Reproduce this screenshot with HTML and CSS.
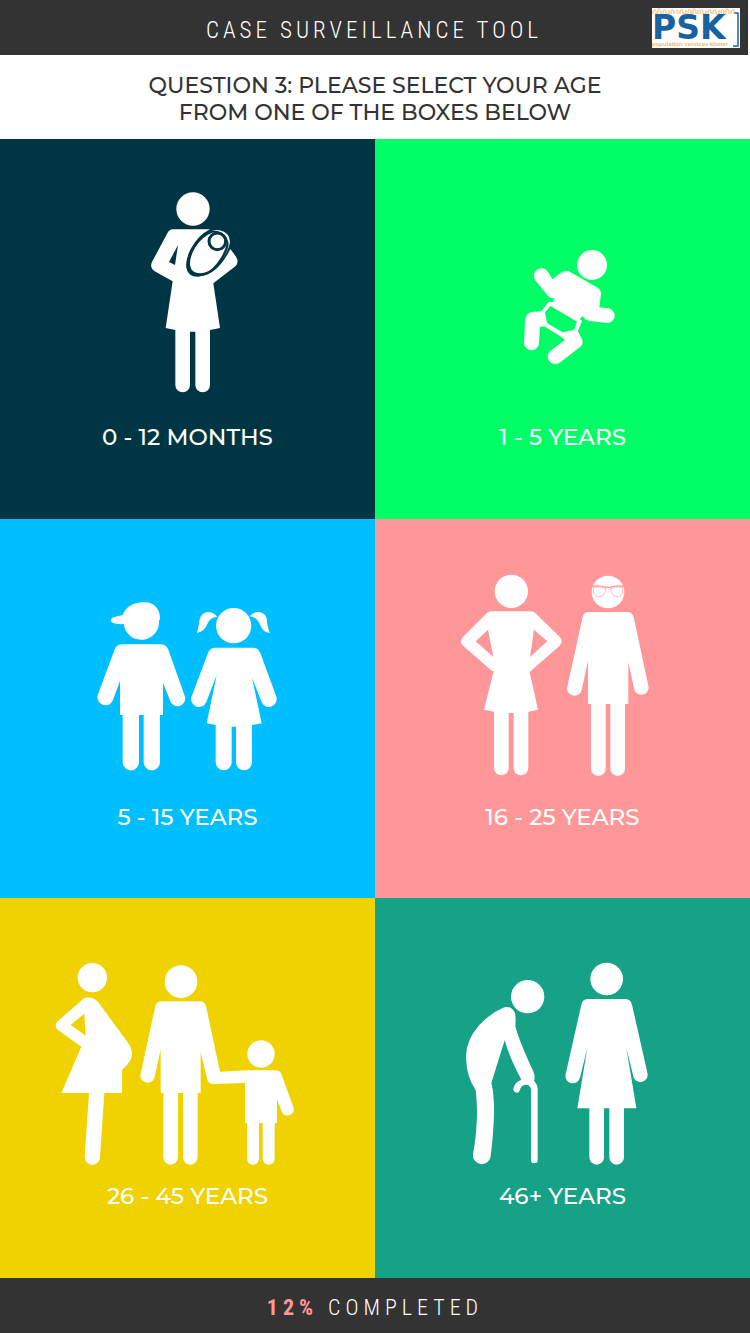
FILE: index.html
```html
<!DOCTYPE html>
<html lang="en">
<head>
<meta charset="utf-8">
<meta name="viewport" content="width=device-width, initial-scale=1">
<title>Case Surveillance Tool</title>
<link rel="stylesheet" href="styles.css">
</head>
<body>
<header class="topbar">
  <h1 class="topbar-title">Case Surveillance Tool</h1>
  <svg class="logo" viewBox="0 0 88 40" role="img" aria-label="PSK population services khmer">
    <rect width="88" height="40" fill="#fff"/>
    <path d="M82 5h4v33h-5" fill="none" stroke="#1763a2" stroke-width="1.5"/>
    <path d="M1 6V3q2-3 3 0v3q2 2 2-3t3 0v3m2 0V3q2-3 3 0v3h3V2m2 4V3q2-3 3 0v3m2-4q3 0 2 4m2 0V3q2-3 3 0v3h3V2m2 4V3q2-3 3 0v3q2 2 2-3t3 0v3m2 0V2m2 4V3q2-3 3 0v3h3V2m2 4V3q2-3 3 0v3m2 0V3q2-3 3 0v3h3V2m2 4V3q2-3 3 0v3q2 2 2-3t3 0v3m2 0V3q2-3 3 0v3" fill="none" stroke="#f8b566" stroke-width="1"/>
    <text class="logo-name" x="0" y="31">PSK</text>
    <text class="logo-sub" x="0" y="38">population services khmer</text>
  </svg>
</header>
<main class="survey">
  <h2 class="question">Question 3: Please select your age<br>from one of the boxes below</h2>
  <div class="choices">
    <button type="button" class="choice navy">
      <svg class="figure" viewBox="-390 -123 1125 816" aria-hidden="true">
        <circle cx="189" cy="87" r="50"/>
        <path d="M129 148H240Q205 165 182 207Q166 239 169 264Q175 291 205 290Q248 286 278 245Q295 221 301 207L318 230Q328 245 317 258L250 310L270 444L240 450V615a22 22 0 0 1-44 0V455H180V615a22 22 0 0 1-44 0V450L107 444L128 304L74 274Q58 262 66 246L112 160Q118 148 129 148ZM144 195L117 246L135 255Z" fill-rule="evenodd"/>
        <path d="M240 155C268 143 298 158 299 186C299 214 262 265 231 276C198 287 179 274 180 249C181 218 209 169 240 155Z"/>
        <path class="cut" stroke-width="7" d="M243 156C268 146 293 160 293 186C293 214 260 269 228 281C195 292 172 277 174 249C176 216 208 170 243 156Z"/>
        <path d="M246 151Q282 145 297 170Q301 186 297 196Q294 172 278 160Q263 151 246 151Z"/>
        <circle class="cut" cx="262" cy="184" r="25" stroke-width="9"/>
      </svg>
      <span class="label">0 - 12 months</span>
    </button>
    <button type="button" class="choice green">
      <svg class="figure" viewBox="-405 -288 1125 816" aria-hidden="true">
        <circle cx="246" cy="90" r="45"/>
        <path d="M128 133L148 116Q166 102 182 112L263 158Q273 164 273 176L268 217L294 220A22 22 0 0 1 290 264L236 257Q223 254 218 243L209 252L216 257L204 289L216 313Q221 324 213 334L148 384A23 23 0 0 1 118 350L165 314L154 306L105 275H90L87 323A22 22 0 0 1 42 323L45 258Q47 231 70 230L94 229L116 200L128 202L134 189Q121 191 115 184L77 138A23 23 0 0 1 112 108ZM121 213L105 232L111 264L157 292L192 285L201 260Z" fill-rule="evenodd"/>
      </svg>
      <span class="label">1 - 5 years</span>
    </button>
    <button type="button" class="choice blue">
      <svg class="figure" viewBox="-255 -216 1125 816" aria-hidden="true">
        <path d="M113 73C122 48 145 33 178 34C209 34 227 56 225 87H222A53 53 0 0 1 116 99C94 101 77 96 77 88C79 78 95 76 113 73Z"/>
        <path d="M111 160H228Q243 161 250 176L299 314A23 23 0 0 1 256 331L234 275V372H225V514a24 24 0 0 1-49 0V372H162V514a24 24 0 0 1-49 0V372H105V270L83 329A24 24 0 0 1 38 313L88 178Q94 160 111 160Z"/>
        <circle cx="446" cy="104" r="53"/>
        <path d="M397 78Q388 64 371 63Q349 64 344 85Q341 107 336 126Q359 121 367 99Q376 77 397 78ZM494 76Q505 62 522 63Q540 65 545 82Q546 108 555 126Q534 124 525 101Q517 78 494 76Z"/>
        <path d="M389 170H506Q520 171 526 186L573 314A23 23 0 0 1 530 334L501 260L530 397L501 402V514a24 24 0 0 1-48 0V407H440V514a24 24 0 0 1-48 0V402L365 397L395 252L364 333A23 23 0 0 1 320 316L369 186Q374 171 389 170Z"/>
      </svg>
      <span class="label">5 - 15 years</span>
    </button>
    <button type="button" class="choice pink">
      <svg class="figure" viewBox="-225 -141 1125 816" aria-hidden="true">
        <circle cx="184" cy="76" r="50"/>
        <path d="M122 136H244Q252 137 259 144L329 212Q341 226 329 239L239 318L264 431L235 437V606a22 22 0 0 1-44 0V441H176V606a22 22 0 0 1-44 0V437L102 431L131 316Q124 314 119 309L40 240Q27 227 39 213L108 144Q115 137 122 136ZM114 191L77 226L130 273ZM252 191L240 273L292 226Z" fill-rule="evenodd"/>
        <circle cx="474" cy="78" r="49"/>
        <path class="cut" stroke-width="4" d="M424 61Q450 57 468 64H480Q498 57 524 61"/>
        <path class="cut" stroke-width="2" d="M431 64Q427 88 443 92Q463 94 468 68Q454 60 431 64ZM518 64Q522 88 506 92Q486 94 481 68Q495 60 518 64Z"/>
        <path d="M414 138H534Q547 139 551 153L596 364A22 22 0 0 1 553 371L535 288V414H525V608a22 22 0 0 1-44 0V414H467V608a22 22 0 0 1-44 0V414H414V285L395 372A22 22 0 0 1 352 362L398 153Q402 139 414 138Z"/>
      </svg>
      <span class="label">16 - 25 years</span>
    </button>
    <button type="button" class="choice yellow">
      <svg class="figure" viewBox="-135 -171 1125 816" aria-hidden="true">
        <circle cx="142" cy="68" r="44"/>
        <path d="M122 128Q147 125 160 142L248 262Q268 290 257 314Q248 330 231 346V414H178L165 607A23 23 0 0 1 119 605L132 414H49L109 275L38 224Q27 213 36 201L111 135Q116 129 122 128ZM118 176L77 209L122 242Z" fill-rule="evenodd"/>
        <circle cx="408" cy="80" r="49"/>
        <path d="M348 139H465Q479 140 483 153L525 350L608 346H692Q704 346 709 357L746 459A19 19 0 0 1 711 472L696 433V504H689V611a18 18 0 0 1-36 0V504H642V611a18 18 0 0 1-36 0V504H600V384L506 387Q492 387 487 375L467 290V414H458V607a22 22 0 0 1-44 0V414H399V607a22 22 0 0 1-44 0V414H347V284L328 370A22 22 0 0 1 286 361L331 153Q335 140 348 139Z"/>
        <circle cx="648" cy="297" r="41"/>
      </svg>
      <span class="label">26 - 45 years</span>
    </button>
    <button type="button" class="choice teal">
      <svg class="figure" viewBox="-240 -171 1125 816" aria-hidden="true">
        <circle cx="218" cy="125" r="50"/>
        <path d="M148 157Q169 152 180 174Q183 186 181 213Q190 252 236 352Q241 366 237 378Q247 387 248 402V615a10 10 0 0 1-20 0V403Q226 388 211 389Q197 391 194 407A10 10 0 0 1 175 405Q176 383 199 374Q164 309 149 256L109 384Q126 449 107 603A26 26 0 0 1 54 599Q73 493 62 405Q34 366 33 306Q32 257 73 210Q108 173 148 157Z"/>
        <circle cx="455" cy="72" r="49"/>
        <path d="M397 132H512Q527 133 531 149L578 357A22 22 0 0 1 536 368L514 278L544 460H507V607a22 22 0 0 1-44 0V460H447V607a22 22 0 0 1-44 0V460H367L397 278L375 368A22 22 0 0 1 332 358L379 149Q383 133 397 132Z"/>
      </svg>
      <span class="label">46+ years</span>
    </button>
  </div>
</main>
<footer class="progress"><p><strong>12%</strong> Completed</p></footer>
</body>
</html>
```
FILE: styles.css
```css
* { box-sizing: border-box; }
body {
  margin: 0;
  min-height: 100vh;
  display: flex;
  flex-direction: column;
  background: #fff;
  color: #333;
  text-transform: uppercase;
}
h1, h2, p { margin: 0; }
.topbar {
  display: grid;
  grid-template-columns: 96px 1fr 96px;
  align-items: center;
  height: 55px;
  background: #333;
  border-right: 2px solid #fff;
}
.topbar-title, .progress {
  font-family: "Roboto Condensed", Roboto, sans-serif;
  font-size: 23px;
  line-height: 28px;
  font-weight: 300;
  letter-spacing: 4px;
  color: #fff;
  text-align: center;
}
.topbar-title { grid-column: 2; padding-top: 6px; }
.logo { width: 88px; height: 40px; text-transform: none; }
.logo-name { font: bold 33px "DejaVu Sans", sans-serif; fill: #1763a2; }
.logo-sub { font: bold 6px "Liberation Sans", sans-serif; fill: #f8b566; }
.survey { flex: 1; display: flex; flex-direction: column; }
.question, .label {
  font-family: Montserrat, Inter, sans-serif;
  font-size: 22px;
  font-weight: 500;
}
.question { padding: 17px 16px 13px; line-height: 27px; text-align: center; }
.choices {
  flex: 1;
  display: grid;
  grid-template-columns: 1fr 1fr;
  grid-auto-rows: 1fr;
}
.choice {
  display: flex;
  flex-direction: column;
  align-items: center;
  justify-content: flex-start;
  gap: 12px;
  margin: 0;
  padding: 0 0 24px;
  border: 0;
  background: var(--tone);
  color: #fff;
  text-transform: uppercase;
  cursor: pointer;
}
.navy { --tone: #003644; }
.green { --tone: #00ff66; }
.blue { --tone: #00bfff; }
.pink { --tone: #ff9698; }
.yellow { --tone: #efd200; }
.teal { --tone: #16a286; }
.figure { width: 100%; height: 272px; fill: #fff; }
.cut { fill: none; stroke: var(--tone); }
.label { font-size: 23px; line-height: 28px; }
.progress { background: #333; padding: 16px 16px 11px; font-size: 22px; letter-spacing: 5px; }
.progress strong { font-weight: 700; color: #ff9698; }
```
